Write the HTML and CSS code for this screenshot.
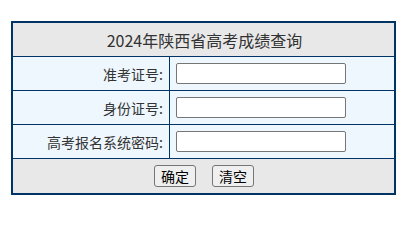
FILE: index.html
```html
<!DOCTYPE html>
<html lang="zh-CN">
<head>
<meta charset="utf-8">
<title>2024年陕西省高考成绩查询</title>
<link rel="stylesheet" href="styles.css">
</head>
<body>
<form class="query">
  <div class="title">2024年陕西省高考成绩查询</div>
  <label class="label" for="zkz">准考证号:</label>
  <div class="field"><input id="zkz" class="input" type="text"></div>
  <label class="label" for="sfz">身份证号:</label>
  <div class="field"><input id="sfz" class="input" type="text"></div>
  <label class="label" for="mm">高考报名系统密码:</label>
  <div class="field"><input id="mm" class="input" type="password"></div>
  <div class="actions">
    <button class="btn" type="button">确定</button>
    <button class="btn" type="reset">清空</button>
  </div>
</form>
</body>
</html>
```
FILE: styles.css
```css
html, body {
  margin: 0;
  padding: 0;
  background: #fff;
}
body {
  padding: 21px 11px 0;
  font-family: "Noto Sans CJK SC", "Microsoft YaHei", sans-serif;
  color: #333;
}
.query {
  width: 385px;
  box-sizing: border-box;
  border: 2px solid #003366;
  background: #003366;
  display: grid;
  grid-template-columns: 156px 224px;
  grid-template-rows: 33px 33px 33px 33px 34px;
  gap: 1px;
  margin: 0;
}
.title {
  grid-column: 1 / 3;
  background: #e8e8e8;
  font-size: 16px;
  display: flex;
  align-items: center;
  justify-content: center;
  padding-left: 2px;
}
.label {
  background: #eff7fe;
  font-size: 14px;
  display: flex;
  align-items: center;
  justify-content: flex-end;
  padding-right: 6px;
}
.field {
  background: #eff7fe;
  display: flex;
  align-items: center;
  padding-left: 6px;
}
.input {
  width: 170px;
  height: 21px;
  box-sizing: border-box;
  border: 1px solid #767676;
  border-radius: 2px;
  background: #fff;
  margin: 0;
  padding: 1px 2px;
  font-size: 13px;
}
.actions {
  grid-column: 1 / 3;
  background: #e8e8e8;
  display: flex;
  align-items: center;
  justify-content: center;
  gap: 16px;
  padding-left: 1px;
}
.btn {
  font-family: "Noto Sans CJK SC", sans-serif;
  font-size: 14px;
  line-height: 18px;
  height: 22px;
  padding: 0 6px;
  margin: 0;
  border: 1px solid #767676;
  border-radius: 3px;
  background: #efefef;
  color: #000;
}
```
